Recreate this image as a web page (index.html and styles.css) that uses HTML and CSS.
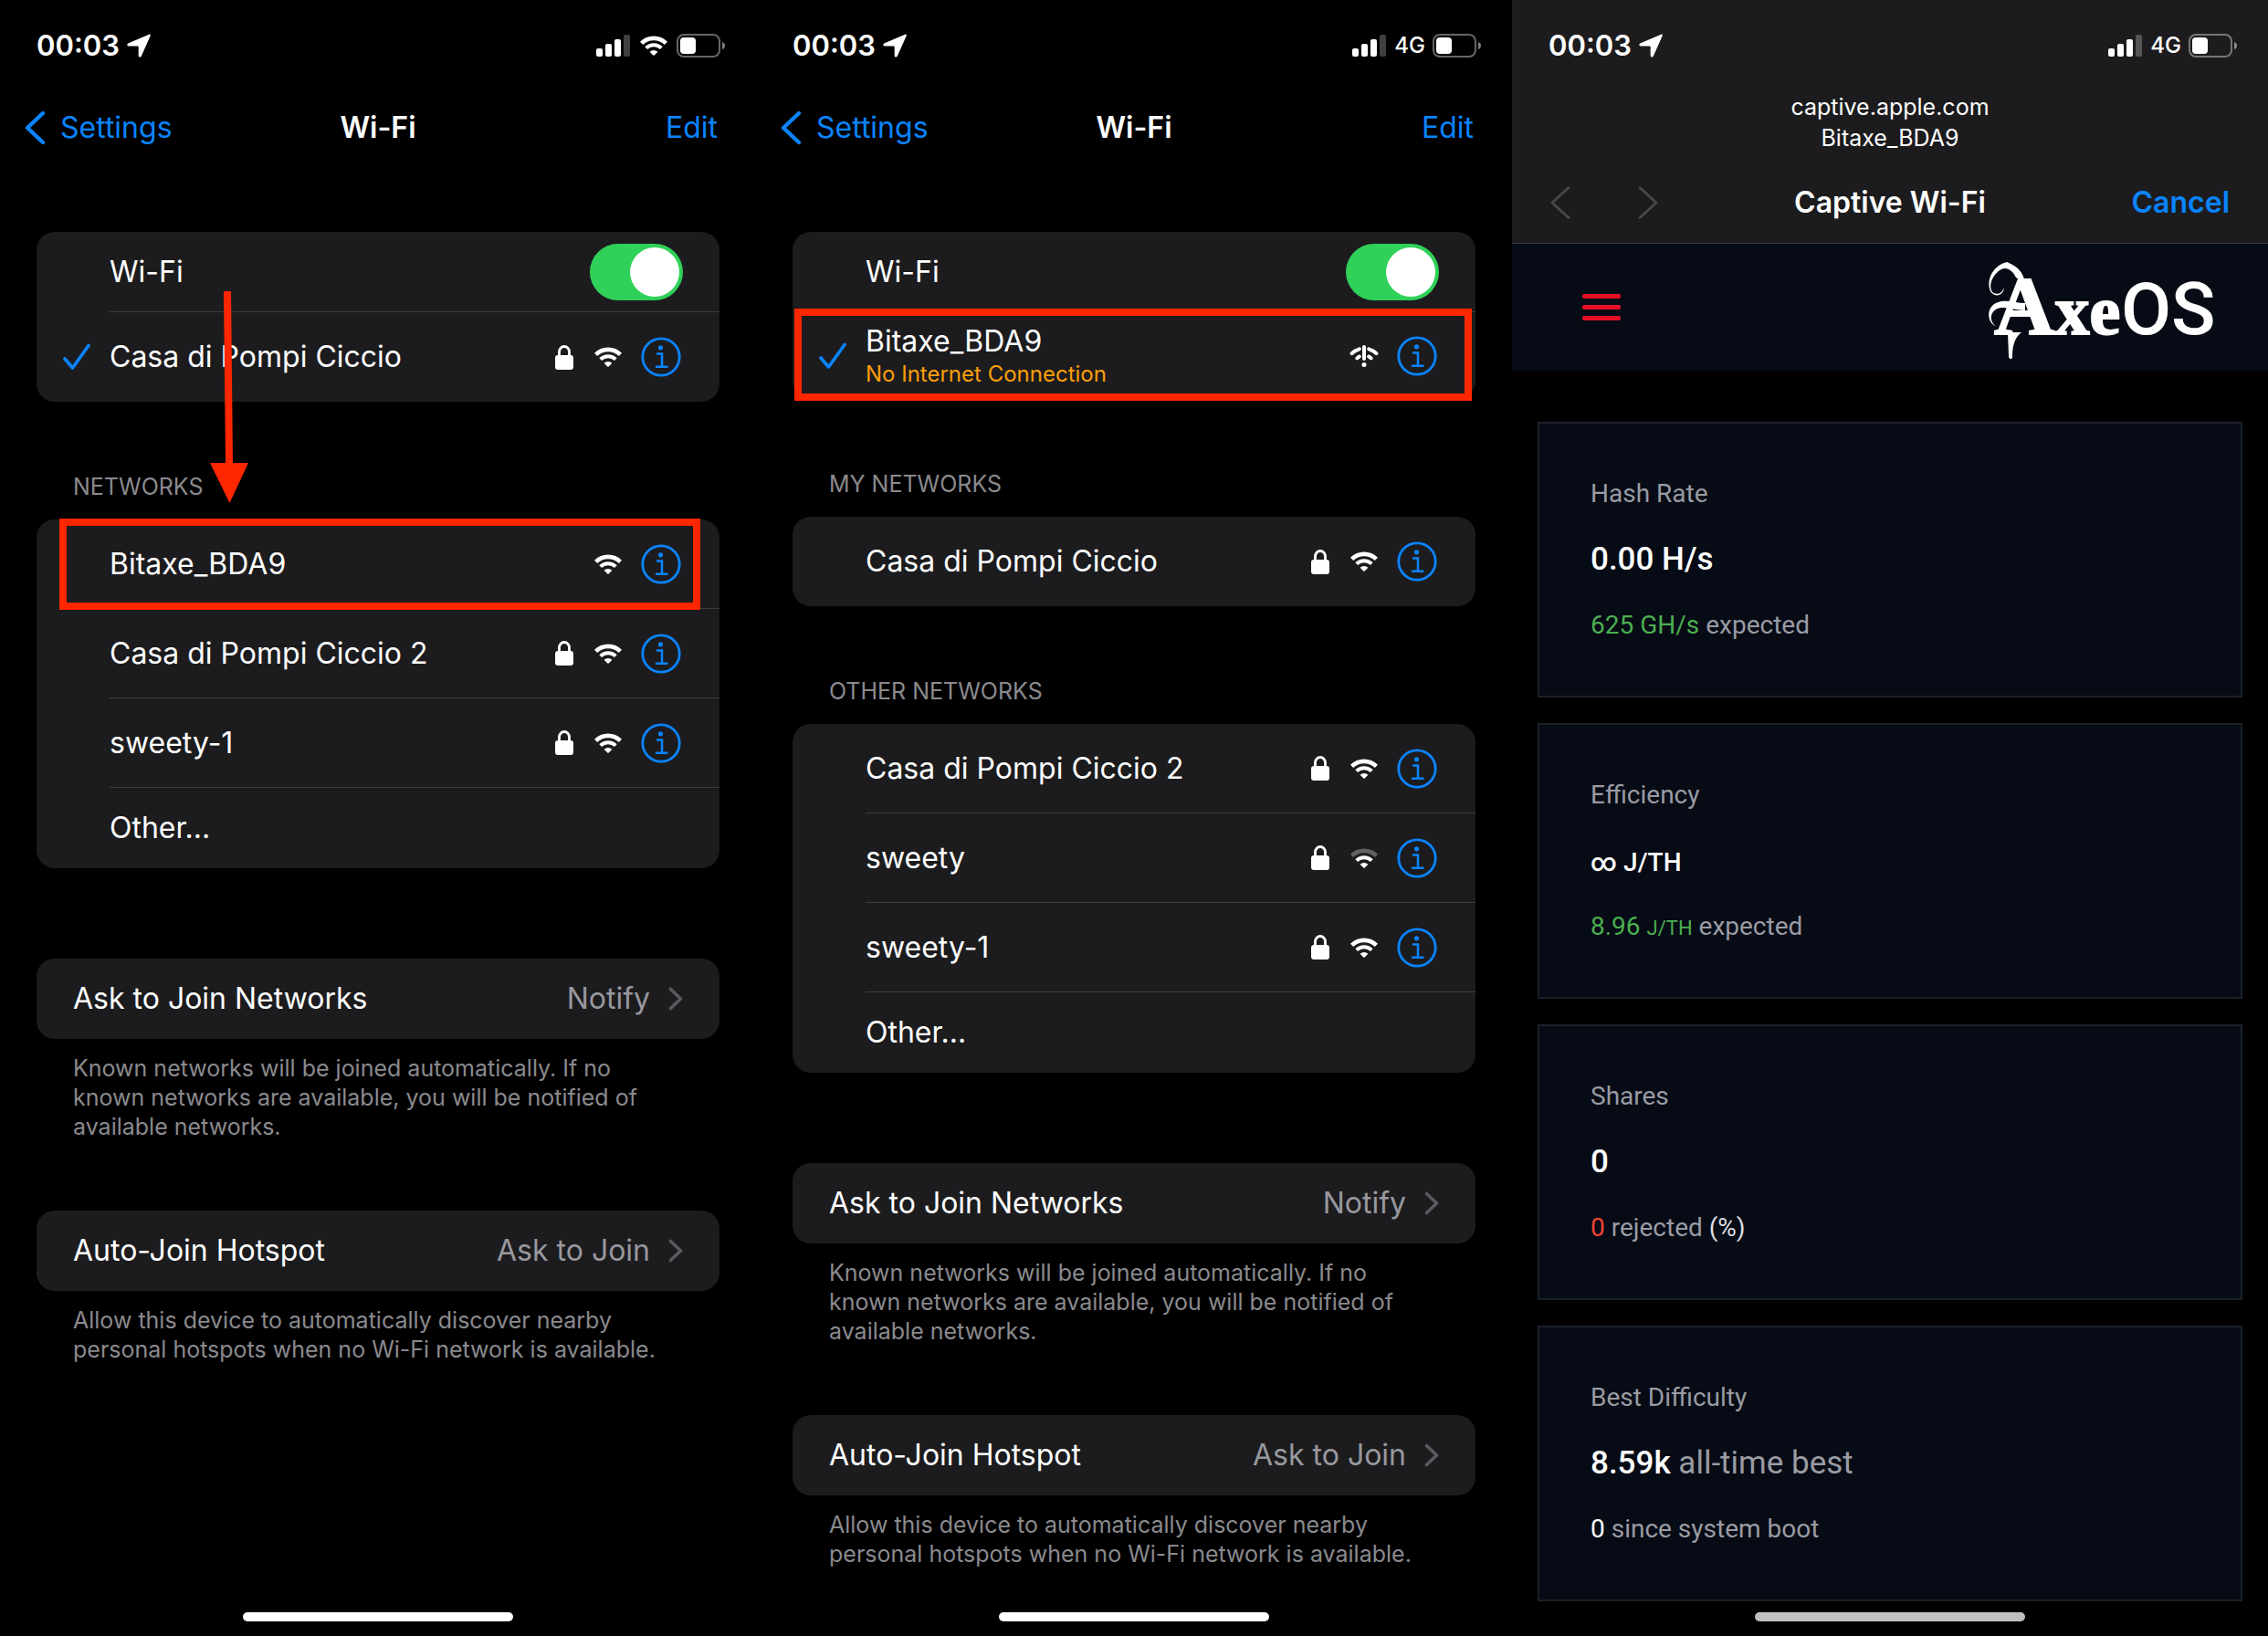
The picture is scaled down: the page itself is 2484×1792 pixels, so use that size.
FILE: index.html
```html
<!DOCTYPE html>
<html lang="en">
<head>
  <meta charset="UTF-8">
  <meta name="viewport" content="width=device-width, initial-scale=1">
  <title>Bitaxe Wi-Fi setup</title>
  <link rel="stylesheet" href="styles.css">
</head>
<body>

<svg class="sprite" aria-hidden="true">
  <symbol id="location" viewBox="0 0 26 26">
    <path d="M24.200 .7C25.500 .1 26.200 1 25.700 2.200L15.800 24.600C15.100 26.100 12.700 25.800 12.700 24.200V14.300Q12.700 13.500 11.900 13.500H2C.1 13.500-.3 11.400 1.300 10.600Z" fill="currentColor"/>
  </symbol>
  <symbol id="signal" viewBox="0 0 38 24">
    <rect y="15" width="7" height="9" rx="2" fill="currentColor"/>
    <rect x="10" y="10" width="7" height="14" rx="2" fill="currentColor"/>
    <rect x="20" y="5" width="7" height="19" rx="2" fill="currentColor"/>
    <rect x="30" width="7" height="24" rx="2" fill="currentColor" opacity=".25"/>
  </symbol>
  <symbol id="battery" viewBox="0 0 54 26">
    <rect x="1" y="1" width="46" height="24" rx="7" fill="none" stroke="currentColor" stroke-width="2" opacity=".4"/>
    <path d="M50 9q3 1 3 4t-3 4z" fill="currentColor" opacity=".5"/>
    <rect x="4" y="4" width="17" height="18" rx="4" fill="currentColor"/>
  </symbol>
  <symbol id="wifi-outer" viewBox="0 0 32 24">
    <path d="M2.600 9.400A19 19 0 0 1 29.400 9.400" fill="none" stroke="currentColor" stroke-width="4.600"/>
  </symbol>
  <symbol id="wifi-inner" viewBox="0 0 32 24">
    <path d="M7.700 14.700A11.800 11.800 0 0 1 24.300 14.700" fill="none" stroke="currentColor" stroke-width="4"/>
    <path d="M11.600 18.700A6.400 6.400 0 0 1 20.400 18.700L16.700 22.500Q16 23.200 15.300 22.500Z" fill="currentColor"/>
  </symbol>
  <symbol id="wifi" viewBox="0 0 32 24">
    <use href="#wifi-outer"/>
    <use href="#wifi-inner"/>
  </symbol>
  <symbol id="wifi-weak" viewBox="0 0 32 24">
    <use href="#wifi-outer" opacity=".3"/>
    <use href="#wifi-inner"/>
  </symbol>
  <symbol id="wifi-alert" viewBox="0 0 32 24">
    <path d="M2.600 9.200A19 19 0 0 1 10.800 4.300M21.200 4.300A19 19 0 0 1 29.400 9.200M8.400 14.400A11.800 11.800 0 0 1 10.800 12.600M21.200 12.600A11.800 11.800 0 0 1 23.600 14.400" fill="none" stroke="currentColor" stroke-width="4" stroke-linecap="round"/>
    <path d="M16 2V15" stroke="currentColor" stroke-width="4" stroke-linecap="round"/>
    <circle cx="16" cy="21.500" r="2.500" fill="currentColor"/>
  </symbol>
  <symbol id="lock" viewBox="0 0 20 27">
    <rect y="11" width="20" height="16" rx="3" fill="currentColor"/>
    <path d="M4.500 12V7.500a5.500 6 0 0 1 11 0V12" fill="none" stroke="currentColor" stroke-width="2.800"/>
  </symbol>
  <symbol id="info" viewBox="0 0 44 44">
    <circle cx="22" cy="22" r="20.200" fill="none" stroke="currentColor" stroke-width="2.800"/>
    <circle cx="21.500" cy="11.800" r="2.600" fill="currentColor"/>
    <path d="M18 18.500h5v14M17 32.800h11.500" fill="none" stroke="currentColor" stroke-width="2.500" stroke-linecap="round"/>
  </symbol>
  <symbol id="check" viewBox="0 0 30 30">
    <path d="M2 17L10.500 27L28 2.500" fill="none" stroke="currentColor" stroke-width="3.600" stroke-linecap="round" stroke-linejoin="round"/>
  </symbol>
  <symbol id="back" viewBox="0 0 24 38">
    <path d="M21 3L4 19L21 35" fill="none" stroke="currentColor" stroke-width="4.400" stroke-linecap="round" stroke-linejoin="round"/>
  </symbol>
  <symbol id="page-back" viewBox="0 0 22 36">
    <path d="M20 1.500L2 18L20 34.500" fill="none" stroke="currentColor" stroke-width="2.800" stroke-linecap="round" stroke-linejoin="round"/>
  </symbol>
  <symbol id="page-forward" viewBox="0 0 22 36">
    <path d="M2 1.500L20 18L2 34.500" fill="none" stroke="currentColor" stroke-width="2.800" stroke-linecap="round" stroke-linejoin="round"/>
  </symbol>
  <symbol id="chevron" viewBox="0 0 16 26">
    <path d="M2.500 2.500L13.500 13L2.500 23.500" fill="none" stroke="currentColor" stroke-width="3.600" stroke-linecap="round" stroke-linejoin="round"/>
  </symbol>
</svg>

<main class="screens">

  <!-- step 1: pick the Bitaxe network -->
  <section class="phone">
    <div class="status">
      <span class="clock">00:03</span>
      <svg class="i-location"><use href="#location"/></svg>
      <span class="status-right">
        <svg class="i-signal"><use href="#signal"/></svg>
        <span class="carrier"><svg class="i-wifi"><use href="#wifi"/></svg></span>
        <svg class="i-battery"><use href="#battery"/></svg>
      </span>
    </div>
    <header class="nav">
      <a class="nav-back" href="#settings"><svg class="i-back"><use href="#back"/></svg>Settings</a>
      <h1>Wi-Fi</h1>
      <button class="nav-action" type="button">Edit</button>
    </header>

    <div class="group">
      <div class="row row-short">
        <div class="row-body">
          <label class="name" for="wifi1">Wi-Fi</label>
          <input class="toggle" id="wifi1" type="checkbox" role="switch" checked>
        </div>
      </div>
      <div class="row">
        <svg class="i-check"><use href="#check"/></svg>
        <div class="row-body">
          <span class="name">Casa di Pompi Ciccio</span>
          <svg class="i-lock"><use href="#lock"/></svg>
          <svg class="i-wifi"><use href="#wifi"/></svg>
          <button class="info" type="button" aria-label="More info"><svg class="i-info"><use href="#info"/></svg></button>
        </div>
      </div>
    </div>

    <h2 class="heading">NETWORKS</h2>
    <div class="group">
      <div class="row row-marked mark-network">
        <div class="row-body">
          <span class="name">Bitaxe_BDA9</span>
          <svg class="i-wifi"><use href="#wifi"/></svg>
          <button class="info" type="button" aria-label="More info"><svg class="i-info"><use href="#info"/></svg></button>
        </div>
      </div>
      <div class="row">
        <div class="row-body">
          <span class="name">Casa di Pompi Ciccio 2</span>
          <svg class="i-lock"><use href="#lock"/></svg>
          <svg class="i-wifi"><use href="#wifi"/></svg>
          <button class="info" type="button" aria-label="More info"><svg class="i-info"><use href="#info"/></svg></button>
        </div>
      </div>
      <div class="row">
        <div class="row-body">
          <span class="name">sweety-1</span>
          <svg class="i-lock"><use href="#lock"/></svg>
          <svg class="i-wifi"><use href="#wifi"/></svg>
          <button class="info" type="button" aria-label="More info"><svg class="i-info"><use href="#info"/></svg></button>
        </div>
      </div>
      <div class="row row-short">
        <div class="row-body"><span class="name">Other...</span></div>
      </div>
    </div>

    <button class="option" type="button">
      <span class="name">Ask to Join Networks</span>
      <span class="value">Notify</span>
      <svg class="i-chevron"><use href="#chevron"/></svg>
    </button>
    <p class="note">Known networks will be joined automatically. If no<br>known networks are available, you will be notified of<br>available networks.</p>

    <button class="option option-next" type="button">
      <span class="name">Auto-Join Hotspot</span>
      <span class="value">Ask to Join</span>
      <svg class="i-chevron"><use href="#chevron"/></svg>
    </button>
    <p class="note">Allow this device to automatically discover nearby<br>personal hotspots when no Wi-Fi network is available.</p>

    <svg class="arrow" viewBox="0 0 42 232" aria-hidden="true">
      <path d="M15 0h8l2 188h17L21.500 232L0 188h17z" fill="#ff2600"/>
    </svg>
    <div class="home-bar"></div>
  </section>

  <!-- step 2: connected, no internet -->
  <section class="phone">
    <div class="status">
      <span class="clock">00:03</span>
      <svg class="i-location"><use href="#location"/></svg>
      <span class="status-right">
        <svg class="i-signal"><use href="#signal"/></svg>
        <span class="carrier">4G</span>
        <svg class="i-battery"><use href="#battery"/></svg>
      </span>
    </div>
    <header class="nav">
      <a class="nav-back" href="#settings"><svg class="i-back"><use href="#back"/></svg>Settings</a>
      <h1>Wi-Fi</h1>
      <button class="nav-action" type="button">Edit</button>
    </header>

    <div class="group">
      <div class="row row-short">
        <div class="row-body">
          <label class="name" for="wifi2">Wi-Fi</label>
          <input class="toggle" id="wifi2" type="checkbox" role="switch" checked>
        </div>
      </div>
      <div class="row row-detail row-marked mark-current">
        <svg class="i-check"><use href="#check"/></svg>
        <div class="row-body">
          <span class="name">Bitaxe_BDA9<small>No Internet Connection</small></span>
          <svg class="i-wifi"><use href="#wifi-alert"/></svg>
          <button class="info" type="button" aria-label="More info"><svg class="i-info"><use href="#info"/></svg></button>
        </div>
      </div>
    </div>

    <h2 class="heading">MY NETWORKS</h2>
    <div class="group">
      <div class="row">
        <div class="row-body">
          <span class="name">Casa di Pompi Ciccio</span>
          <svg class="i-lock"><use href="#lock"/></svg>
          <svg class="i-wifi"><use href="#wifi"/></svg>
          <button class="info" type="button" aria-label="More info"><svg class="i-info"><use href="#info"/></svg></button>
        </div>
      </div>
    </div>

    <h2 class="heading">OTHER NETWORKS</h2>
    <div class="group">
      <div class="row">
        <div class="row-body">
          <span class="name">Casa di Pompi Ciccio 2</span>
          <svg class="i-lock"><use href="#lock"/></svg>
          <svg class="i-wifi"><use href="#wifi"/></svg>
          <button class="info" type="button" aria-label="More info"><svg class="i-info"><use href="#info"/></svg></button>
        </div>
      </div>
      <div class="row">
        <div class="row-body">
          <span class="name">sweety</span>
          <svg class="i-lock"><use href="#lock"/></svg>
          <svg class="i-wifi"><use href="#wifi-weak"/></svg>
          <button class="info" type="button" aria-label="More info"><svg class="i-info"><use href="#info"/></svg></button>
        </div>
      </div>
      <div class="row">
        <div class="row-body">
          <span class="name">sweety-1</span>
          <svg class="i-lock"><use href="#lock"/></svg>
          <svg class="i-wifi"><use href="#wifi"/></svg>
          <button class="info" type="button" aria-label="More info"><svg class="i-info"><use href="#info"/></svg></button>
        </div>
      </div>
      <div class="row row-short">
        <div class="row-body"><span class="name">Other...</span></div>
      </div>
    </div>

    <button class="option" type="button">
      <span class="name">Ask to Join Networks</span>
      <span class="value">Notify</span>
      <svg class="i-chevron"><use href="#chevron"/></svg>
    </button>
    <p class="note">Known networks will be joined automatically. If no<br>known networks are available, you will be notified of<br>available networks.</p>

    <button class="option option-next" type="button">
      <span class="name">Auto-Join Hotspot</span>
      <span class="value">Ask to Join</span>
      <svg class="i-chevron"><use href="#chevron"/></svg>
    </button>
    <p class="note">Allow this device to automatically discover nearby<br>personal hotspots when no Wi-Fi network is available.</p>

    <div class="home-bar"></div>
  </section>

  <!-- step 3: AxeOS captive page -->
  <section class="phone">
    <header class="captive">
      <div class="status">
        <span class="clock">00:03</span>
        <svg class="i-location"><use href="#location"/></svg>
        <span class="status-right">
          <svg class="i-signal"><use href="#signal"/></svg>
          <span class="carrier">4G</span>
          <svg class="i-battery"><use href="#battery"/></svg>
        </span>
      </div>
      <p class="address">captive.apple.com<br>Bitaxe_BDA9</p>
      <div class="captive-nav">
        <div class="pager">
          <button type="button" aria-label="Back" disabled><svg class="i-page"><use href="#page-back"/></svg></button>
          <button type="button" aria-label="Forward" disabled><svg class="i-page"><use href="#page-forward"/></svg></button>
        </div>
        <h1>Captive Wi-Fi</h1>
        <button class="nav-action cancel" type="button">Cancel</button>
      </div>
    </header>

    <div class="toolbar">
      <button class="menu" type="button" aria-label="Menu"><span></span><span></span><span></span></button>
      <svg class="logo" viewBox="0 0 246 110" role="img" aria-label="AxeOS">
        <!-- flourishes round the initial -->
        <path d="M17 33C16 44 3 44 1 34C-2 20 8 8 20 5C32 10 38 16 40 28L30 22C26 14 20 10 14 13C6 17 0 28 3 36C6 42 14 41 17 33ZM9 76C-2 72-3 55 8 50C18 45 28 50 40 50V58C28 58 16 52 8 57C0 62 2 72 9 76ZM21 82H36C28 88 26 98 26 109C26 112 22 112 22 108Z"/>
        <text class="logo-axe" x="6" y="84"><tspan class="logo-initial">A</tspan>xe</text>
        <text class="logo-os" x="145" y="84">OS</text>
      </svg>
    </div>

    <div class="cards">
      <article class="card">
        <h2>Hash Rate</h2>
        <p class="main">0.00 H/s</p>
        <p class="sub"><span class="good">625 GH/s</span> expected</p>
      </article>
      <article class="card">
        <h2>Efficiency</h2>
        <p class="main"><span class="unit">∞ J/TH</span></p>
        <p class="sub"><span class="good">8.96 <span class="unit">J/TH</span></span> expected</p>
      </article>
      <article class="card">
        <h2>Shares</h2>
        <p class="main">0</p>
        <p class="sub"><span class="bad">0</span> rejected <span class="percent">(%)</span></p>
      </article>
      <article class="card">
        <h2>Best Difficulty</h2>
        <p class="main">8.59k <span class="muted">all-time best</span></p>
        <p class="sub"><span class="strong">0</span> since system boot</p>
      </article>
    </div>
    <div class="home-bar home-bar-dim"></div>
  </section>

</main>
</body>
</html>
```
FILE: styles.css
```css
* {
  box-sizing: border-box;
  margin: 0;
  padding: 0;
}

body {
  background: #000;
  color: #fff;
  font: 400 32px/40px Inter, "Liberation Sans", sans-serif;
}

button {
  background: none;
  border: 0;
  color: inherit;
  font: inherit;
  cursor: pointer;
}

svg {
  display: block;
  flex: none;
}

.sprite {
  position: absolute;
  width: 0;
  height: 0;
}

.screens {
  display: grid;
  grid-template-columns: repeat(3, 1fr);
  min-height: 100vh;
}

.phone {
  position: relative;
  display: flex;
  flex-direction: column;
  min-width: 0;
  padding-bottom: 16px;
}

/* icons */
.i-location { width: 26px; height: 26px; }
.i-signal { width: 38px; height: 24px; }
.i-battery { width: 54px; height: 26px; }
.i-wifi { width: 32px; height: 24px; }
.i-lock { width: 20px; height: 27px; }
.i-info { width: 44px; height: 44px; }
.i-check { width: 30px; height: 30px; color: #0a84ff; }
.i-back { width: 24px; height: 38px; }
.i-page { width: 22px; height: 36px; }
.i-chevron { width: 16px; height: 26px; color: #5a5a5e; }

/* status bar */
.status {
  display: flex;
  align-items: center;
  gap: 8px;
  height: 100px;
  padding: 0 33px 0 40px;
}

.clock {
  font-size: 31px;
  font-weight: 600;
}

.status-right {
  display: flex;
  align-items: center;
  gap: 8px;
  margin-left: auto;
}

.carrier {
  display: flex;
  justify-content: center;
  width: 34px;
  font-size: 24px;
  font-weight: 500;
}

/* navigation */
.nav {
  display: grid;
  grid-template-columns: 1fr auto 1fr;
  align-items: center;
  height: 80px;
  margin-bottom: 74px;
  padding: 0 42px;
}

h1 {
  font-size: 32px;
  font-weight: 600;
}

.nav-back {
  display: flex;
  align-items: center;
  gap: 16px;
  margin-left: -16px;
  color: #0a84ff;
  text-decoration: none;
}

.nav-action {
  justify-self: end;
  color: #0a84ff;
}

/* grouped lists */
.group {
  margin: 0 40px;
  border-radius: 20px;
  background: #1c1c1e;
}

.row {
  position: relative;
  display: flex;
  align-items: center;
  min-height: 98px;
  padding-left: 80px;
}

.row-short {
  min-height: 88px;
}

.row-detail {
  min-height: 95px;
}

.row .i-check {
  position: absolute;
  left: 29px;
}

.row-body {
  display: flex;
  flex: 1;
  align-self: stretch;
  align-items: center;
  gap: 22px;
  padding-right: 40px;
  border-bottom: 1px solid #3d3d41;
}

.row:last-child .row-body {
  border-bottom: 0;
}

.name {
  flex: 1;
  text-align: left;
}

.name small {
  display: block;
  color: #ff9f0a;
  font-size: 24px;
  line-height: 32px;
}

.info {
  margin: 0 2px 0 -2px;
  color: #0a84ff;
}

.toggle {
  display: flex;
  align-items: center;
  justify-content: flex-end;
  width: 102px;
  height: 62px;
  padding: 4px;
  border-radius: 31px;
  appearance: none;
  background: #30d158;
  cursor: pointer;
}

.toggle::before {
  content: "";
  width: 54px;
  height: 54px;
  border-radius: 50%;
  background: #fff;
}

.heading {
  margin: 77px 80px 20px;
  color: #8a8a8e;
  font-size: 25px;
  font-weight: 400;
  line-height: 32px;
}

.option {
  display: flex;
  align-items: center;
  gap: 20px;
  min-height: 88px;
  margin: 99px 40px 0;
  padding: 0 40px;
  border-radius: 20px;
  background: #1c1c1e;
}

.option-next {
  margin-top: 76px;
}

.option .value {
  color: #98989e;
}

.note {
  margin: 16px 40px 0 80px;
  color: #8a8a8e;
  font-size: 25px;
  line-height: 32px;
}

/* red callouts */
.row-marked::after {
  content: "";
  position: absolute;
  border: 8px solid #ff2600;
  pointer-events: none;
}

.mark-network::after {
  inset: -1px 21px -1px 25px;
}

.mark-current::after {
  inset: -4px 4px -2px 2px;
}

.arrow {
  position: absolute;
  top: 319px;
  left: 230px;
  width: 42px;
  height: 232px;
}

.home-bar {
  width: 296px;
  height: 10px;
  margin: auto auto 0;
  border-radius: 5px;
  background: #fff;
}

.home-bar-dim {
  background: #bfbfbf;
}

/* captive portal */
.captive {
  border-bottom: 1px solid #3a3a3d;
  background: #1c1c1e;
}

.address {
  font-size: 25px;
  line-height: 34px;
  text-align: center;
}

.captive-nav {
  display: grid;
  grid-template-columns: 1fr auto 1fr;
  align-items: center;
  height: 88px;
  margin-top: 10px;
  padding: 0 42px;
}

.pager {
  display: flex;
  gap: 74px;
  color: #48484b;
}

.cancel {
  font-weight: 600;
}

.toolbar {
  display: flex;
  align-items: center;
  justify-content: space-between;
  height: 139px;
  padding: 0 60px 0 77px;
  background: #060b15;
}

.menu {
  display: flex;
  flex-direction: column;
  gap: 7px;
  width: 42px;
}

.menu span {
  height: 5px;
  border-radius: 2px;
  background: #e60f28;
}

.logo {
  width: 246px;
  height: 110px;
  overflow: visible;
  fill: #fff;
}

.logo-axe {
  font: 700 76px "Liberation Serif", serif;
  stroke: #fff;
  stroke-width: 2px;
}

.logo-initial {
  font-size: 92px;
}

.logo-os {
  font: 500 80px Roboto, sans-serif;
}

.cards {
  display: grid;
  gap: 28px;
  padding: 56px 28px 12px;
  font-family: Roboto, sans-serif;
}

.card {
  display: grid;
  gap: 28px;
  padding: 56px;
  border: 2px solid #1b2128;
  background: #060b15;
}

.card h2,
.sub {
  color: #9a9ba3;
  font-size: 28px;
  font-weight: 400;
  line-height: 42px;
}

.main {
  font-size: 35px;
  font-weight: 500;
  line-height: 46px;
}

.unit {
  line-height: 1;
}

.main .unit {
  font-size: 28px;
}

.sub .unit {
  font-size: 22px;
}

.muted {
  color: #9a9ba3;
  font-weight: 400;
}

.good {
  color: #4caf50;
}

.bad {
  color: #f44336;
}

.percent {
  color: #dcdde0;
}

.strong {
  color: #fff;
}
```
